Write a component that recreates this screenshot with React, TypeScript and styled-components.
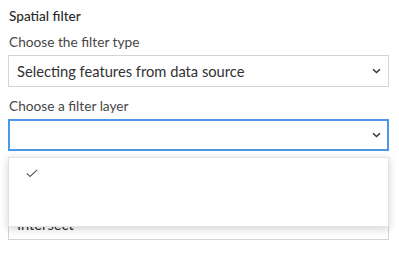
import React from 'react';
import styled, { createGlobalStyle } from 'styled-components';

const GlobalStyle = createGlobalStyle`
  body {
    margin: 0;
    background: #ffffff;
    font-family: Lato, "Open Sans", sans-serif;
    color: #323232;
  }
`;

const Panel = styled.div`
  position: relative;
  display: flex;
  flex-direction: column;
  width: 399px;
  height: 257px;
  padding: 7px 10px 0 8px;
  box-sizing: border-box;
  overflow: hidden;
`;

const Title = styled.div`
  font-size: 13.6px;
  font-weight: 500;
  color: #2b2b2b;
  line-height: 18px;
  padding-left: 1px;
  margin-bottom: 7px;
`;

const Field = styled.div<{ $gap?: number }>`
  display: flex;
  flex-direction: column;
  flex-shrink: 0;
  margin-top: ${(p) => p.$gap ?? 0}px;
  margin-bottom: 9px;
`;

const Label = styled.label`
  font-size: 13.7px;
  color: #474747;
  line-height: 20px;
  padding-left: 1px;
  margin-bottom: 3px;
`;

const SelectBox = styled.div<{ $focused?: boolean }>`
  display: flex;
  align-items: center;
  justify-content: space-between;
  height: 32px;
  box-sizing: border-box;
  padding: 0 7px 0 8px;
  background: #fff;
  border: 1px solid ${(p) => (p.$focused ? '#4c97e8' : '#d4d4d4')};
  box-shadow: ${(p) => (p.$focused ? 'inset 0 0 0 1px #4c97e8' : 'none')};
  font-size: 14.7px;
  color: #323232;
`;

const Chevron = () => (
  <svg width="9" height="6" viewBox="0 0 9 6">
    <path d="M1 1.2 L4.5 4.6 L8 1.2" fill="none" stroke="#333" strokeWidth="1.4" />
  </svg>
);

const Menu = styled.div`
  position: absolute;
  left: 8px;
  top: 157px;
  width: 381px;
  height: 70px;
  box-sizing: border-box;
  background: #fff;
  border: 1px solid #e3e3e3;
  box-shadow: 0 2px 8px rgba(0, 0, 0, 0.18);
  padding-top: 1px;
`;

const MenuItem = styled.div`
  display: flex;
  align-items: center;
  height: 28px;
  padding-left: 17px;
`;

const Check = () => (
  <svg width="12" height="9" viewBox="0 0 12 9">
    <path d="M0.8 4.4 L4 7.4 L11.2 0.8" fill="none" stroke="#555" strokeWidth="1.1" />
  </svg>
);

export default function App() {
  return (
    <>
      <GlobalStyle />
      <Panel>
        <Title>Spatial filter</Title>
        <Field>
          <Label>Choose the filter type</Label>
          <SelectBox>
            <span>Selecting features from data source</span>
            <Chevron />
          </SelectBox>
        </Field>
        <Field>
          <Label>Choose a filter layer</Label>
          <SelectBox $focused>
            <span />
            <Chevron />
          </SelectBox>
        </Field>
        <Field $gap={25}>
          <Label>Choose the spatial relationship</Label>
          <SelectBox>
            <span>Intersect</span>
            <Chevron />
          </SelectBox>
        </Field>
        <Menu>
          <MenuItem>
            <Check />
          </MenuItem>
          <MenuItem />
        </Menu>
      </Panel>
    </>
  );
}
